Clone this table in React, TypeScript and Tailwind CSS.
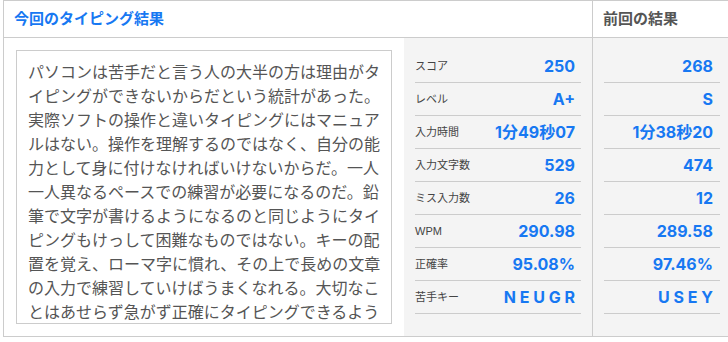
import React from 'react';

const current = [
  { label: 'スコア', value: '250' },
  { label: 'レベル', value: 'A+' },
  { label: '入力時間', value: '1分49秒07' },
  { label: '入力文字数', value: '529' },
  { label: 'ミス入力数', value: '26' },
  { label: 'WPM', value: '290.98' },
  { label: '正確率', value: '95.08%' },
  { label: '苦手キー', value: 'N E U G R' },
];

const previous = ['268', 'S', '1分38秒20', '474', '12', '289.58', '97.46%', 'U S E Y'];

const passage =
  'パソコンは苦手だと言う人の大半の方は理由がタイピングができないからだという統計があった。実際ソフトの操作と違いタイピングにはマニュアルはない。操作を理解するのではなく、自分の能力として身に付けなければいけないからだ。一人一人異なるペースでの練習が必要になるのだ。鉛筆で文字が書けるようになるのと同じようにタイピングもけっして困難なものではない。キーの配置を覚え、ローマ字に慣れ、その上で長めの文章の入力で練習していけばうまくなれる。大切なことはあせらず急がず正確にタイピングできるようにすることだ。';

const valueFont = { fontFamily: 'Inter, "Noto Sans CJK JP", sans-serif' };

const App = () => {
  return (
    <div
      className="w-[728px] h-[342px] overflow-hidden bg-white"
      style={{ fontFamily: '"Liberation Sans", "Noto Sans CJK JP", sans-serif' }}
    >
      <div className="ml-[3px] w-[725px] border-t border-b border-l border-[#cccccc] grid grid-cols-[588px_137px]">
        {/* header */}
        <div className="h-[37px] border-b border-[#cccccc] flex items-center pl-[10px]">
          <h2 className="text-[15px] font-bold text-[#1778f2]">今回のタイピング結果</h2>
        </div>
        <div className="h-[37px] border-b border-l border-[#cccccc] flex items-center pl-[10px]">
          <h2 className="text-[15px] font-bold text-[#555555]">前回の結果</h2>
        </div>

        {/* body */}
        <div className="h-[298px] flex">
          <div className="w-[400px] pl-[12px] pt-[12px]">
            <div className="w-[376px] h-[274px] border border-[#cccccc] overflow-hidden pl-[11px] pr-[8px] pt-[10px]">
              <p className="text-[16px] leading-[24px] text-[#555555]">{passage}</p>
            </div>
          </div>
          <div className="w-[188px] bg-[#f4f4f4] px-[11px] pt-[12px]">
            {current.map((row) => (
              <div key={row.label} className="h-[33px] border-b border-[#cccccc] flex items-center justify-between pr-[6px]">
                <span className="text-[11px] text-[#444444]">{row.label}</span>
                <span className="text-[16px] font-bold text-[#1778f2]" style={valueFont}>
                  {row.value}
                </span>
              </div>
            ))}
          </div>
        </div>
        <div className="h-[298px] border-l border-[#cccccc] bg-[#f4f4f4] pl-[11px] pr-[9px] pt-[12px]">
          {previous.map((value, i) => (
            <div key={i} className="h-[33px] border-b border-[#cccccc] flex items-center justify-end pr-[7px]">
              <span className="text-[16px] font-bold text-[#1778f2]" style={valueFont}>
                {value}
              </span>
            </div>
          ))}
        </div>
      </div>
    </div>
  );
};

export default App;
